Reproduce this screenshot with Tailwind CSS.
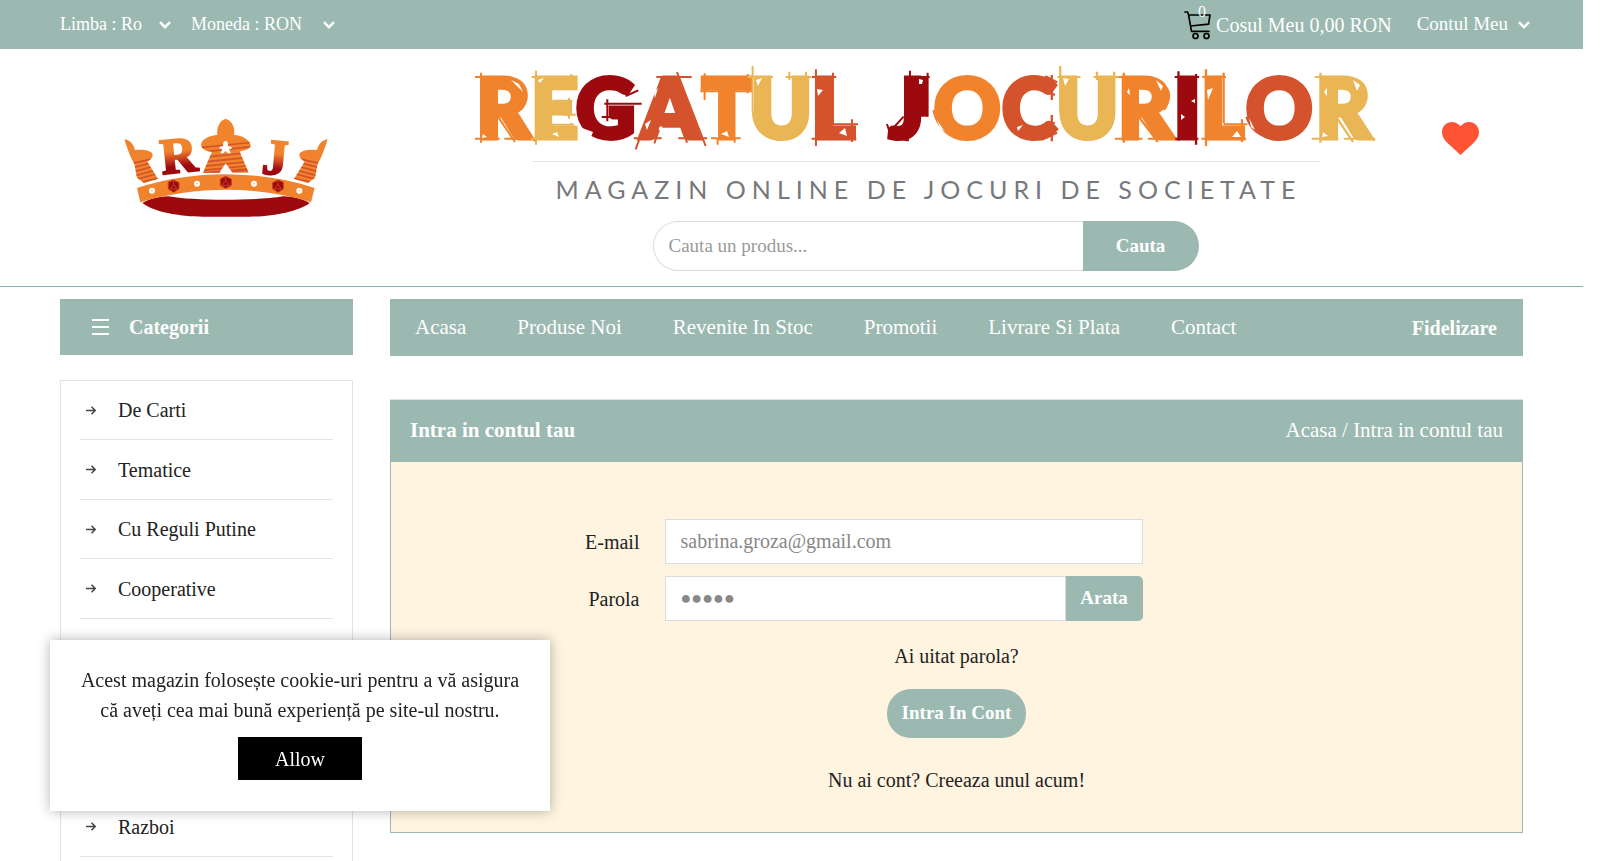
<!DOCTYPE html>
<html lang="ro">
<head>
<meta charset="utf-8">
<meta name="viewport" content="width=device-width, initial-scale=1">
<title>Regatul Jocurilor - Intra in contul tau</title>
<script src="https://cdn.jsdelivr.net/npm/@tailwindcss/browser@4"></script>
</head>
<body class="h-screen overflow-hidden bg-white pr-5 font-['Liberation_Serif',serif] text-[20px] text-[#222222]">

<!-- Top bar -->
<div class="flex h-[49px] items-center bg-[#9bb9b1] pr-[53px] pl-[60px] text-[18px] text-white">
  <label class="flex items-center">
    <select aria-label="Limba" class="h-8 w-[112px] appearance-none bg-transparent outline-none"><option>Limba : Ro</option></select>
    <svg class="pointer-events-none -ml-[13px] h-2 w-3" viewBox="0 0 12 8" fill="none" stroke="currentColor" stroke-width="2.4"><path d="M1 1.2 6 6.2 11 1.2"/></svg>
  </label>
  <label class="ml-5 flex items-center">
    <select aria-label="Moneda" class="h-8 w-[145px] appearance-none bg-transparent outline-none"><option>Moneda : RON</option></select>
    <svg class="pointer-events-none -ml-[13px] h-2 w-3" viewBox="0 0 12 8" fill="none" stroke="currentColor" stroke-width="2.4"><path d="M1 1.2 6 6.2 11 1.2"/></svg>
  </label>
  <a href="#" class="relative ml-auto flex items-center text-[20px]">
    <svg class="mr-[5px] h-[30px] w-[27px]" viewBox="0 0 27 30" fill="none" stroke="#000" stroke-width="1.7" stroke-linecap="round" stroke-linejoin="round"><path d="M1 2h2.6l1 3 2.9 16.4H25M4.8 5H26l-1.4 9.2L6.4 16"/><circle cx="11.5" cy="26" r="2.5"/><circle cx="22.5" cy="26" r="2.5"/></svg>
    <span class="absolute -top-[6px] left-[14px] text-[16px] leading-4">0</span>
    <span>Cosul Meu 0,00 RON</span>
  </a>
  <button class="ml-[25px] flex items-center gap-[10px] text-[19px]">Contul Meu
    <svg class="h-2 w-3" viewBox="0 0 12 8" fill="none" stroke="currentColor" stroke-width="2.4"><path d="M1 1.2 6 6.2 11 1.2"/></svg>
  </button>
</div>

<!-- Header -->
<header class="grid grid-cols-[394px_1fr_126px] border-b border-[#84b5b0] pr-[60px] pl-[60px]">
  <a href="#" aria-label="RAJ" class="w-[332px] pt-[68px]">
    <svg class="mx-auto h-[102px] w-[207px]" viewBox="70 50 621 306">
      <defs>
        <linearGradient id="g" gradientUnits="userSpaceOnUse" x1="0" y1="110" x2="0" y2="226"><stop offset=".4" stop-color="#f0832c"/><stop offset=".62" stop-color="#c8401f"/><stop offset=".8" stop-color="#9c0a10"/></linearGradient>
        <clipPath id="meeples">
          <path d="M74 117C88 118 101 130 106 149 124 147 156 148 159 163 160 172 148 181 143 184L175 236 133 248 112 232 104 190C92 172 82 142 74 117Z"/>
          <path d="M684 117C670 118 657 130 652 149 634 147 602 148 599 163 598 172 610 181 615 184L583 236 625 248 646 232 654 190C666 172 676 142 684 117Z"/>
          <path d="M378 56C395 59 408 82 403 104 428 105 452 120 453 135 452 150 424 152 420 154L447 217 399 217 378 189 359 217 310 217 337 154C318 152 305 146 304 133 306 116 330 106 353 104 350 80 362 59 378 56Z"/>
        </clipPath>
      </defs>
      <path d="M128 308C150 296 170 290 206 288 280 302 470 302 550 288 590 290 612 298 630 308 600 332 520 349 450 349H310C240 349 160 334 128 308Z" fill="#9c0a10"/>
      <path d="M112 263C280 208 475 208 645 263L634 306C475 256 285 256 122 306Z" fill="#f0832c"/>
      <g clip-path="url(#meeples)">
        <path d="M60 40H700V260H60Z" fill="#f0832c"/>
        <g stroke="#d4532c" stroke-width="5" fill="none">
          <path d="M96 190 165 174M96 203 170 184M96 216 175 194M96 229 180 206M96 241 180 218M100 252 180 232"/>
          <path d="M662 190 593 174M662 203 588 184M662 216 583 194M662 229 578 206M662 241 578 218M658 252 578 232"/>
          <path d="M300 142 460 126M300 156 460 138M300 172 460 156M300 186 460 170M300 199 460 183M300 211 460 195"/>
          <path d="M300 220 460 206" stroke-width="9"/>
        </g>
      </g>
      <path d="M378 122C384 122 387 130 384 136L396 140C399 144 394 146 388 147L394 159H384L378 152 371 159H362L368 147C361 146 357 143 360 140L371 136C369 129 372 122 378 122Z" fill="#fff"/>
      <g fill="url(#g)" stroke="url(#g)" stroke-width="6" font-family="Liberation Serif" font-weight="bold">
        <text x="188" y="222" font-size="152" transform="rotate(-6 188 222)">R</text>
        <text x="484" y="219" font-size="152" transform="rotate(5 484 219)">J</text>
      </g>
      <g fill="#9c0a10" stroke="#c8401f" stroke-width="3">
        <path d="M206 245 222 239 238 247 238 265 222 276 206 266Z"/><path d="M362 236 378 228 395 236 395 255 378 264 362 255Z"/><path d="M519 247 535 239 551 246 551 266 535 276 519 265Z"/>
        <path d="M222 239V252L212 266H232L222 252M378 228V240L367 255H389L378 240M535 239V252L525 266H545L535 252" fill="none"/>
      </g>
      <g fill="#fff"><circle cx="157" cy="271" r="9"/><circle cx="292" cy="250" r="9"/><circle cx="463" cy="250" r="9"/><circle cx="599" cy="271" r="9"/></g>
      <g fill="#f0a050"><circle cx="157" cy="271" r="2"/><circle cx="292" cy="250" r="2"/><circle cx="463" cy="250" r="2"/><circle cx="599" cy="271" r="2"/></g>
    </svg>
  </a>

  <div class="flex flex-col items-center pt-[15px] pb-[15px]">
    <a href="#" class="flex flex-col items-center">
      <svg class="h-[88px] w-[906px]" viewBox="474 64 906 88" role="img" aria-label="Regatul Jocurilor">
        <text y="138" font-family="Lato" font-weight="900" font-size="82" stroke-width="5"><tspan x="478" fill="#f0832c" stroke="#f0832c">R</tspan><tspan x="532" fill="#eab555" stroke="#eab555">E</tspan><tspan x="577" fill="#9c0a10" stroke="#9c0a10">G</tspan><tspan x="642" fill="#d4532c" stroke="#d4532c">A</tspan><tspan x="703" fill="#f0832c" stroke="#f0832c">T</tspan><tspan x="752" fill="#eab555" stroke="#eab555">U</tspan><tspan x="813" fill="#d4532c" stroke="#d4532c">L</tspan> <tspan x="890" fill="#9c0a10" stroke="#9c0a10">J</tspan><tspan x="935" fill="#f0832c" stroke="#f0832c">O</tspan><tspan x="1003" fill="#d4532c" stroke="#d4532c">C</tspan><tspan x="1058" fill="#eab555" stroke="#eab555">U</tspan><tspan x="1119" fill="#f0832c" stroke="#f0832c">R</tspan><tspan x="1176" fill="#9c0a10" stroke="#9c0a10">I</tspan><tspan x="1202" fill="#f0832c" stroke="#f0832c">L</tspan><tspan x="1247" fill="#d4532c" stroke="#d4532c">O</tspan><tspan x="1318" fill="#eab555" stroke="#eab555">R</tspan></text>
        <!-- sketch strokes around the first word -->
        <g transform="translate(460 50) scale(.3333)" fill="none" stroke-width="6">
          <path stroke="#f0832c" d="M48 81H150M66 68V278M48 266H122M136 266H232M110 190 168 276M175 190 228 274M150 80Q235 130 170 186M726 81H880M737 70V150M724 124H880M866 72V130M756 265H845M776 262V284M827 262V278"/>
          <path stroke="#eab555" d="M218 81H345M231 62V284M337 72V100M280 152H340M330 144V206M315 194H350M275 224H345M337 218V270M215 266H348M881 48V180M866 81H942M980 81H1056M991 65V90M1041 65V190Q1040 262 962 270 884 262 881 180"/>
          <path stroke="#9c0a10" d="M500 138 538 121M436 161H548M445 148V214M428 201H496M1336 81H1412M1353 62V200M1406 68V200M1284 222 1292 246 1334 200M1288 236Q1320 275 1350 270"/>
          <path stroke="#9c0a10" stroke-width="26" d="M1393 84V200"/>
          <path stroke="#d4532c" d="M592 81H698M654 66 740 288M608 84 530 298M524 265H608M658 265H744M610 230H665M586 280 600 240M684 278 670 230M1058 81H1132M1071 58V288M1122 68V220M1122 223H1197M1179 208V276M1058 266H1192"/>
        </g>
        <!-- sketch strokes around the second word -->
        <g transform="translate(920 50) scale(.3827 .3333)" fill="none" stroke-width="6">
          <path stroke="#f0832c" d="M38 180Q50 255 126 270M520 81H600M535 68V278M512 266H584M598 266H678M574 200 624 276M625 190 674 272M600 80Q680 110 640 180M740 81H802M750 58V288M796 68V220M796 223H858M844 208V276M738 266H855"/>
          <path stroke="#d4532c" d="M347 75V150M347 195V274M330 78 361 97M325 120 355 135M320 230 355 218M320 270 361 248M224 200Q240 260 300 270M856 200Q870 260 943 270"/>
          <path stroke="#eab555" d="M369 48V180M362 81H422M456 81H522M465 65V90M510 65V190Q506 262 438 270 372 262 369 180M1034 81H1110M1049 68V278M1026 266H1096M1110 266H1192M1090 200 1134 276M1140 190 1190 272M1110 80Q1192 110 1152 180"/>
          <path stroke="#9c0a10" d="M668 81H732M678 64V272M724 72V284M670 266H730"/>
        </g>
        <!-- chalk marks left unfilled -->
        <g fill="#fff">
          <path d="M512 80 520 84 524 92 518 86ZM484 134 488 137 483 138ZM539 80 545 78 541 83ZM553 134 558 132 560 137ZM583 128 594 132 592 137 585 133ZM655 92 659 88 656 98ZM646 124 652 120 648 130ZM722 134 728 131 730 137ZM757 80 763 78 759 86ZM818 89 824 90 819 96ZM840 133 846 128 848 136ZM920 79 924 80 923 84 920 84Z"/>
          <path d="M938 120 946 132 941 128ZM1018 127 1024 125 1019 131ZM1064 78 1070 79 1066 86ZM1128 92 1130 88 1131 95ZM1157 80 1164 86 1162 91ZM1182 114 1186 117 1182 120ZM1192 101 1196 99 1196 103ZM1208 90 1214 88 1209 100ZM1233 137 1238 131 1242 137ZM1250 118 1256 130 1252 127ZM1325 92 1328 88 1328 96ZM1354 80 1361 85 1358 91ZM1324 132 1329 136 1323 137Z"/>
        </g>
      </svg>
      <span class="mt-[9px] h-px w-[788px] bg-[#e6e6e6]"></span>
      <span class="mt-[9px] -mr-[6px] font-['Lato'] text-[25px] leading-[36px] tracking-[6px] whitespace-nowrap text-[#77787b]">MAGAZIN ONLINE DE JOCURI DE SOCIETATE</span>
    </a>
    <form class="mt-[14px] flex h-[50px] w-[546px]">
      <input type="text" aria-label="Cauta un produs" placeholder="Cauta un produs..." class="min-w-0 flex-1 rounded-l-[25px] border border-r-0 border-[#dcdcdc] bg-white px-[15px] text-[19px] outline-none placeholder:text-[#999999]">
      <button type="button" class="w-[116px] rounded-r-[25px] bg-[#9bb9b1] text-[19px] font-bold text-white">Cauta</button>
    </form>
  </div>

  <a href="#" aria-label="Favorite" class="flex justify-center pt-[73px]">
    <svg class="h-[33px] w-[37px]" viewBox="0 0 37 33" fill="#ff5335"><path d="M18.500 4.300C21 1.400 24 0 27 0 32.800 0 37 4.600 37 10.300 37 14.500 34.800 17.500 32 20.400L18.500 33 5 20.400C2.200 17.500 0 14.500 0 10.300 0 4.600 4.200 0 10 0 13 0 16 1.400 18.500 4.300Z"/></svg>
  </a>
</header>

<main class="flex items-start gap-[37px] px-[60px] pt-3">
  <!-- Categories -->
  <aside class="w-[293px] shrink-0">
    <h2 class="flex h-14 items-center gap-5 bg-[#9bb9b1] pl-8 text-[20px] font-bold text-white">
      <svg class="h-4 w-[17px]" viewBox="0 0 17 16" fill="currentColor"><path d="M0 0h17v2H0zM0 7h17v2H0zM0 14h17v2H0z"/></svg>
      Categorii
    </h2>
    <ul class="mt-[25px] border border-[#e3e3e3] px-[19px]">
      <li class="border-b border-[#e3e3e3] odd:h-[59px] even:h-[60px]"><a href="#" class="flex h-full items-center gap-[22px] pl-[6px]"><svg class="h-[9px] w-[10px]" viewBox="0 0 10 9" fill="none" stroke="#444" stroke-width="1.5"><path d="M0 4.500h9M5.500.8 9.200 4.500 5.500 8.200"/></svg>De Carti</a></li>
      <li class="border-b border-[#e3e3e3] odd:h-[59px] even:h-[60px]"><a href="#" class="flex h-full items-center gap-[22px] pl-[6px]"><svg class="h-[9px] w-[10px]" viewBox="0 0 10 9" fill="none" stroke="#444" stroke-width="1.5"><path d="M0 4.500h9M5.500.8 9.200 4.500 5.500 8.200"/></svg>Tematice</a></li>
      <li class="border-b border-[#e3e3e3] odd:h-[59px] even:h-[60px]"><a href="#" class="flex h-full items-center gap-[22px] pl-[6px]"><svg class="h-[9px] w-[10px]" viewBox="0 0 10 9" fill="none" stroke="#444" stroke-width="1.5"><path d="M0 4.500h9M5.500.8 9.200 4.500 5.500 8.200"/></svg>Cu Reguli Putine</a></li>
      <li class="border-b border-[#e3e3e3] odd:h-[59px] even:h-[60px]"><a href="#" class="flex h-full items-center gap-[22px] pl-[6px]"><svg class="h-[9px] w-[10px]" viewBox="0 0 10 9" fill="none" stroke="#444" stroke-width="1.5"><path d="M0 4.500h9M5.500.8 9.200 4.500 5.500 8.200"/></svg>Cooperative</a></li>
      <li class="border-b border-[#e3e3e3] odd:h-[59px] even:h-[60px]"></li>
      <li class="border-b border-[#e3e3e3] odd:h-[59px] even:h-[60px]"></li>
      <li class="border-b border-[#e3e3e3] odd:h-[59px] even:h-[60px]"></li>
      <li class="border-b border-[#e3e3e3] odd:h-[59px] even:h-[60px]"><a href="#" class="flex h-full items-center gap-[22px] pl-[6px]"><svg class="h-[9px] w-[10px]" viewBox="0 0 10 9" fill="none" stroke="#444" stroke-width="1.5"><path d="M0 4.500h9M5.500.8 9.200 4.500 5.500 8.200"/></svg>Razboi</a></li>
      <li class="h-[59px]"></li>
    </ul>
  </aside>

  <div class="min-w-0 flex-1">
    <nav class="flex h-[57px] items-center gap-[51px] bg-[#9bb9b1] pr-[26px] pl-[25px] text-[21px] text-white">
      <a href="#">Acasa</a>
      <a href="#">Produse Noi</a>
      <a href="#">Revenite In Stoc</a>
      <a href="#">Promotii</a>
      <a href="#">Livrare Si Plata</a>
      <a href="#">Contact</a>
      <a href="#" class="ml-auto text-[20px] font-bold">Fidelizare</a>
    </nav>

    <!-- Login panel -->
    <section class="mt-[43px] border-t border-[#dfe3e0]">
      <div class="flex h-[62px] items-center justify-between bg-[#9bb9b1] px-5 text-[21px] text-white">
        <h1 class="font-bold">Intra in contul tau</h1>
        <p><a href="#">Acasa</a> / <a href="#">Intra in contul tau</a></p>
      </div>
      <form class="flex h-[371px] flex-col items-center border border-t-0 border-[#9bb9b1] bg-[#fff4e0] pt-[57px]">
        <div class="grid grid-cols-[1fr_478px_1fr] items-center gap-x-[25px] gap-y-3 self-stretch pr-[106px]">
          <label for="email" class="text-right">E-mail</label>
          <input id="email" type="email" placeholder="sabrina.groza@gmail.com" class="h-[45px] border border-[#dcdcdc] bg-white px-[15px] outline-none placeholder:text-[#888888]">
          <span></span>
          <label for="parola" class="text-right">Parola</label>
          <div class="flex h-[45px]">
            <input id="parola" type="password" placeholder="●●●●●" class="min-w-0 flex-1 border border-[#dcdcdc] bg-white px-[15px] text-[18px] outline-none placeholder:text-[#888888]">
            <button type="button" class="w-[77px] rounded-r-[5px] bg-[#9bb9b1] text-[19px] font-bold text-white">Arata</button>
          </div>
        </div>
        <a href="#" class="mt-[21px] leading-[28px]">Ai uitat parola?</a>
        <button type="button" class="mt-[19px] h-[49px] w-[139px] rounded-[24px] bg-[#9bb9b1] text-[19px] font-bold text-white">Intra In Cont</button>
        <a href="#" class="mt-[28px] leading-[28px]">Nu ai cont? Creeaza unul acum!</a>
      </form>
    </section>
  </div>
</main>

<!-- Cookie notice -->
<div role="dialog" aria-label="Cookie-uri" class="fixed bottom-[50px] left-[50px] flex h-[171px] w-[500px] flex-col items-center bg-white pt-[25px] shadow-[0_0_12px_rgba(0,0,0,0.3)]">
  <p class="text-center leading-[30px]">Acest magazin folosește cookie-uri pentru a vă asigura<br>că aveți cea mai bună experiență pe site-ul nostru.</p>
  <button class="mt-3 h-[43px] w-[124px] bg-black text-white">Allow</button>
</div>
</body>
</html>
